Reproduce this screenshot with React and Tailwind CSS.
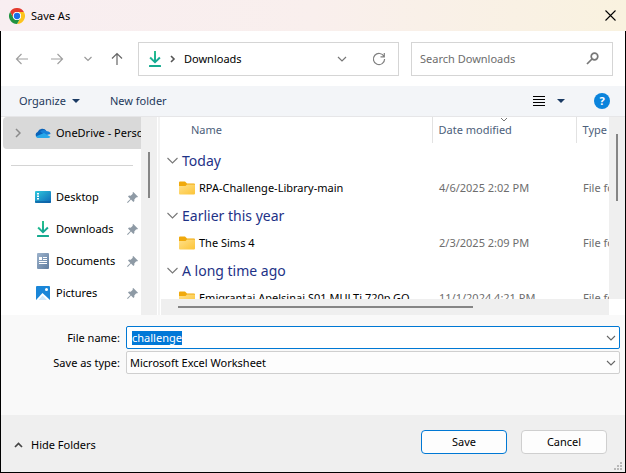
import { useEffect, useRef } from "react";

function ChromeLogo() {
  return (
    <svg width="16" height="16" viewBox="0 0 48 48" aria-hidden="true">
      <circle cx="24" cy="24" r="24" fill="#fff" />
      <path d="M24 12h20.8A24 24 0 0 0 3.2 12l10.4 18A12 12 0 0 1 24 12z" fill="#e33b2e" />
      <path d="M34.4 30 24 48A24 24 0 0 0 44.8 12H24a12 12 0 0 1 10.4 18z" fill="#fcc31e" />
      <path d="M13.6 30 3.2 12A24 24 0 0 0 24 48l10.4-18a12 12 0 0 1-20.8 0z" fill="#229342" />
      <circle cx="24" cy="24" r="12" fill="#fff" />
      <circle cx="24" cy="24" r="9.5" fill="#1a6ee8" />
    </svg>
  );
}

function Stroke({ w, h, d, width = 1.2, className = "" }) {
  return (
    <svg
      width={w}
      height={h}
      viewBox={`0 0 ${w} ${h}`}
      fill="none"
      stroke="currentColor"
      strokeWidth={width}
      className={`shrink-0 ${className}`}
      aria-hidden="true"
    >
      <path d={d} />
    </svg>
  );
}

function DownloadIcon() {
  return (
    <svg width="16" height="16" viewBox="0 0 16 16" fill="none" className="shrink-0" aria-hidden="true">
      <defs>
        <linearGradient id="dl" x1="0" y1="0" x2="0.6" y2="1">
          <stop offset="0" stopColor="#2fc98b" />
          <stop offset="1" stopColor="#0fa394" />
        </linearGradient>
      </defs>
      <path d="M7 0h2v9l3.200-3.200 1.400 1.400L8 12.600 2.400 7.200l1.400-1.400L7 9z" fill="url(#dl)" />
      <rect x="2" y="14" width="12" height="2" rx="0.5" fill="#16ab90" />
    </svg>
  );
}

function OneDriveIcon() {
  return (
    <svg width="16" height="16" viewBox="0 0 16 16" className="shrink-0" aria-hidden="true">
      <path d="M2.5 12.6A3 3 0 0 1 2.6 7 5 5 0 0 1 11.6 6.2L9 12z" fill="#0a62b8" />
      <path d="M5.3 6.8a4 4 0 0 1 6.3-.6A3.7 3.7 0 0 1 15.6 9l-5 1.2z" fill="#1780d8" />
      <path d="M.7 11.6 9 7.9l6.4 3.9a2.6 2.6 0 0 1-2.2 1.2H3.2a3 3 0 0 1-2.5-1.4z" fill="#28a8ea" />
    </svg>
  );
}

function DesktopIcon() {
  return (
    <svg width="16" height="16" viewBox="0 0 16 16" className="shrink-0" aria-hidden="true">
      <defs>
        <linearGradient id="dk" x1="0" y1="0" x2="1" y2="1">
          <stop offset="0" stopColor="#2fc8dc" />
          <stop offset="1" stopColor="#0e68b8" />
        </linearGradient>
      </defs>
      <rect x="0" y="2" width="16" height="12" rx="1" fill="url(#dk)" />
      <path d="M2 4h2v1.500H2zM2 6.500h2V8H2zM2 9h2v1.500H2z" fill="#fff" />
      <path d="M0 12h16v1a1 1 0 0 1-1 1H1a1 1 0 0 1-1-1z" fill="#0c5a9c" opacity=".6" />
    </svg>
  );
}

function DocumentIcon() {
  return (
    <svg width="16" height="16" viewBox="0 0 16 16" className="shrink-0" aria-hidden="true">
      <defs>
        <linearGradient id="dc" x1="0" y1="0" x2="1" y2="1">
          <stop offset="0" stopColor="#9db3cc" />
          <stop offset="1" stopColor="#5f7c9f" />
        </linearGradient>
      </defs>
      <rect x="2" y="0" width="12" height="16" rx="1" fill="url(#dc)" />
      <path d="M4 4h3v3H4zM8 4h4v1H8zM8 6h4v1H8zM4 8h8v1H4zM4 10h8v1H4z" fill="#fff" />
    </svg>
  );
}

function PicturesIcon() {
  return (
    <svg width="16" height="16" viewBox="0 0 16 16" className="shrink-0" aria-hidden="true">
      <rect x="1" y="1" width="14" height="14" rx="1" fill="#1a86d8" />
      <path d="M1.500 14.500 7.500 8l7 6.500a1 1 0 0 1-.5.500H2a1 1 0 0 1-.5-.5z" fill="#fff" />
      <path d="M3.500 15 7.500 10.500 12 15z" fill="#cfe8fb" />
      <circle cx="11.500" cy="4.500" r="1.500" fill="#fff" />
    </svg>
  );
}

function FolderIcon() {
  return (
    <svg width="16" height="14" viewBox="0 0 16 14" className="shrink-0" aria-hidden="true">
      <defs>
        <linearGradient id="fo" x1="0" y1="0" x2="1" y2="1">
          <stop offset="0" stopColor="#ffe08a" />
          <stop offset="1" stopColor="#fcc437" />
        </linearGradient>
      </defs>
      <path d="M0 1.500A1 1 0 0 1 1 .5h5L8 2.500h7a1 1 0 0 1 1 1V8H0z" fill="#f0a90c" />
      <path d="M0 5h6.500L8 3.500h7.500a.5.5 0 0 1 .5.500v8.500a1 1 0 0 1-1 1H1a1 1 0 0 1-1-1z" fill="url(#fo)" />
    </svg>
  );
}

function PinIcon() {
  return (
    <svg width="11" height="11" viewBox="0 0 11 11" fill="#8e9aa5" className="shrink-0" aria-hidden="true">
      <path d="M6.300 0 11 4.700l-1 .8-.8-.2L7.300 7.400l.1 1.700-1 .9L4 7.600.8 11 0 10.200 3.400 7 1 4.600l1-1 1.700.1L5.800 1.800 5.500.8z" />
    </svg>
  );
}

function Caret() {
  return (
    <svg width="8" height="4" viewBox="0 0 8 4" fill="#1a3a63" className="shrink-0" aria-hidden="true">
      <path d="M0 0h8L4 4z" />
    </svg>
  );
}

const places = [
  { name: "Desktop", Icon: DesktopIcon },
  { name: "Downloads", Icon: DownloadIcon },
  { name: "Documents", Icon: DocumentIcon },
  { name: "Pictures", Icon: PicturesIcon },
];

const groups = [
  { title: "Today", file: "RPA-Challenge-Library-main", date: "4/6/2025 2:02 PM" },
  { title: "Earlier this year", file: "The Sims 4", date: "2/3/2025 2:09 PM" },
  { title: "A long time ago", file: "Emigrantai.Apelsinai.S01.MULTi.720p.GO", date: "11/1/2024 4:21 PM" },
];

function TitleBar() {
  return (
    <header className="flex h-[31px] items-center bg-linear-to-r from-[#f8eef1] via-[#f9efed] to-[#f9f2df] pr-[10px] pl-[9px]">
      <ChromeLogo />
      <h1 className="ml-[6px] flex-1">Save As</h1>
      <button type="button" aria-label="Close" className="text-black">
        <Stroke w={11} h={11} d="M.5.5l10 10M10.500.5l-10 10" width={1.1} />
      </button>
    </header>
  );
}

function NavRow() {
  return (
    <nav className="flex h-[55px] items-center bg-white pr-[12px] pl-[14px]">
      <button type="button" aria-label="Back" className="text-[#a0a0a0]">
        <Stroke w={14} h={12} d="M13 6H1.500M6.500 1 1.500 6l5 5" />
      </button>
      <button type="button" aria-label="Forward" className="ml-[21px] text-[#a0a0a0]">
        <Stroke w={14} h={12} d="M1 6h11.500M7.500 1l5 5-5 5" />
      </button>
      <button type="button" aria-label="Recent locations" className="ml-[19px] text-[#9a9a9a]">
        <Stroke w={10} h={6} d="M1.500 1 5 4.500 8.500 1" />
      </button>
      <button type="button" aria-label="Up" className="ml-[17px] text-[#666]">
        <Stroke w={14} h={14} d="M7 13V1.500M2 6.500l5-5 5 5" />
      </button>
      <div className="ml-[14px] flex h-[34px] flex-1 items-center border border-[#d5d5d5] pr-[12px] pl-[8px]">
        <DownloadIcon />
        <Stroke w={6} h={8} d="M1 1l3 3-3 3" width={1.6} className="ml-[7px] text-[#555]" />
        <span className="ml-[8px] flex-1">Downloads</span>
        <button type="button" aria-label="Previous locations" className="text-[#777]">
          <Stroke w={10} h={6} d="M1 1l4 4 4-4" />
        </button>
        <button type="button" aria-label="Refresh" className="ml-[25px] text-[#808080]">
          <Stroke w={14} h={14} d="M12 4.500A5.600 5.600 0 1 0 12.600 7M12.300 1v3.800H8.500" />
        </button>
      </div>
      <div className="ml-[12px] flex h-[34px] w-[202px] items-center border border-[#d5d5d5] pr-[13px] pl-[8px]">
        <input
          type="search"
          aria-label="Search Downloads"
          placeholder="Search Downloads"
          className="min-w-0 flex-1 bg-transparent outline-none placeholder:text-[#6d6d6d]"
        />
        <svg width="13" height="13" viewBox="0 0 13 13" fill="none" stroke="#777" strokeWidth="1.7" aria-hidden="true">
          <circle cx="8.500" cy="4.500" r="3.300" />
          <path d="M6 7 1 12" />
        </svg>
      </div>
    </nav>
  );
}

function Toolbar() {
  return (
    <div className="flex h-[31px] items-center border-b border-[#e6e6e8] bg-[#f3f5f8] pr-[15px] pl-[18px] text-[#1e395b]">
      <button type="button" className="flex items-center gap-[6px]">
        Organize <Caret />
      </button>
      <button type="button" className="ml-[30px]">New folder</button>
      <button type="button" aria-label="Change view" className="ml-auto text-black">
        <Stroke w={12} h={11} d="M0 .5h12M0 3.500h12M0 6.500h12M0 9.500h12" width={1} />
      </button>
      <button type="button" aria-label="More view options" className="ml-[12px]">
        <Caret />
      </button>
      <button
        type="button"
        aria-label="Help"
        className="ml-[29px] flex size-4 items-center justify-center rounded-full bg-[#0b84dc] font-bold text-white"
      >
        ?
      </button>
    </div>
  );
}

function Sidebar() {
  return (
    <aside className="flex w-[156px] shrink-0 bg-white">
      <div className="w-[140px] overflow-hidden pl-[2px]">
        <a href="#onedrive" className="flex h-[32px] items-center rounded-l-sm bg-[#d9d9d9] pl-[12px] whitespace-nowrap">
          <Stroke w={6} h={10} d="M1 1l4 4-4 4" width={1.5} className="mr-[14px] text-[#8a8a8a]" />
          <OneDriveIcon />
          <span className="ml-[5px]">OneDrive - Personal</span>
        </a>
        <div className="flex h-[32px] items-center pr-[8px] pl-[8px]">
          <hr className="w-full border-[#d4d4d4]" />
        </div>
        <ul>
          {places.map(({ name, Icon }) => (
            <li key={name}>
              <a href={`#${name}`} className="flex h-[32px] items-center pr-[3px] pl-[32px]">
                <Icon />
                <span className="ml-[5px] flex-1">{name}</span>
                <PinIcon />
              </a>
            </li>
          ))}
        </ul>
      </div>
      <div className="flex w-[16px] justify-center bg-[#efefef] pt-[35px]">
        <div className="h-[46px] w-[2px] bg-[#858585]" />
      </div>
    </aside>
  );
}

function FileList() {
  return (
    <section className="flex min-w-0 flex-1 flex-col bg-white">
      <div className="flex h-[182px]">
        <div className="min-w-0 flex-1 overflow-hidden">
          <table className="w-[535px] table-fixed border-collapse text-left">
            <colgroup>
              <col className="w-[271px]" />
              <col className="w-[144px]" />
              <col className="w-[120px]" />
            </colgroup>
            <thead className="text-[#4c607a]">
              <tr className="h-[26px]">
                <th className="p-0 pl-[30px] font-normal">Name</th>
                <th className="relative border-l border-[#e2e2e2] p-0 pl-[6px] font-normal">
                  Date modified
                  <Stroke w={8} h={5} d="M1 0l3 3 3-3" width={1} className="absolute top-[1px] left-[67px] text-[#777]" />
                </th>
                <th className="border-l border-[#e2e2e2] p-0 pl-[6px] font-normal">Type</th>
              </tr>
            </thead>
            <tbody aria-hidden="true">
              <tr className="h-[4px]">
                <td colSpan={3} className="p-0" />
              </tr>
            </tbody>
            {groups.map((g) => (
              <tbody key={g.title}>
                <tr className="h-[27px]">
                  <th colSpan={3} className="p-0 pl-[6px] font-normal">
                    <button type="button" className="flex items-center gap-[4px] text-[14px] leading-[18px] text-[#1e3287]">
                      <Stroke w={11} h={7} d="M.5 1l5 5 5-5" width={1.1} className="text-[#777]" />
                      {g.title}
                    </button>
                  </th>
                </tr>
                <tr className="h-[28px] text-[#6d6d6d]">
                  <td className="p-0 pl-[18px]">
                    <div className="flex items-center gap-[4px] whitespace-nowrap text-black">
                      <FolderIcon />
                      {g.file}
                    </div>
                  </td>
                  <td className="p-0 pl-[7px]">{g.date}</td>
                  <td className="p-0 pl-[7px]">File folder</td>
                </tr>
              </tbody>
            ))}
          </table>
        </div>
        <div className="flex w-[16px] justify-center bg-[#efefef] pt-[17px]">
          <div className="h-[67px] w-[2px] bg-[#858585]" />
        </div>
      </div>
      <div className="mr-[16px] flex h-[16px] items-center bg-[#efefef] pl-[17px]">
        <div className="h-[2px] w-[295px] bg-[#858585]" />
      </div>
    </section>
  );
}

function SaveForm() {
  const nameRef = useRef(null);
  useEffect(() => {
    nameRef.current.focus();
    nameRef.current.select();
  }, []);
  return (
    <div className="grid grid-cols-[119px_1fr] items-center gap-x-[6px] gap-y-[2px] bg-[#f9f9f9] pt-[11px] pr-[5px] pb-[41px]">
      <label htmlFor="file-name" className="text-right">File name:</label>
      <div className="flex h-[23px] items-center rounded-xs border border-[#0078d4] bg-white pr-[3px]">
        <input
          id="file-name"
          ref={nameRef}
          defaultValue="challenge"
          className="min-w-0 flex-1 bg-transparent pl-[5px] outline-none selection:bg-[#0078d7] selection:text-white"
        />
        <Stroke w={10} h={6} d="M1 1l4 4 4-4" width={1.1} className="text-[#666]" />
      </div>
      <label htmlFor="save-type" className="text-right">Save as type:</label>
      <div className="flex h-[23px] items-center rounded-xs border border-[#cfcfcf] bg-[#fdfdfd] pr-[3px]">
        <select id="save-type" className="min-w-0 flex-1 appearance-none bg-transparent pl-[3px] outline-none">
          <option>Microsoft Excel Worksheet</option>
        </select>
        <Stroke w={10} h={6} d="M1 1l4 4 4-4" width={1.1} className="text-[#666]" />
      </div>
    </div>
  );
}

function ResizeGrip() {
  return (
    <svg width="8" height="8" viewBox="0 0 8 8" fill="#b8b8b8" className="absolute right-[3px] bottom-[2px]" aria-hidden="true">
      <path d="M6 0h2v2H6zM3 3h2v2H3zM6 3h2v2H6zM0 6h2v2H0zM3 6h2v2H3zM6 6h2v2H6z" />
    </svg>
  );
}

function Footer() {
  return (
    <footer className="relative flex h-[57px] items-start bg-[#efefef] pt-[15px] pr-[18px] pl-[13px]">
      <button type="button" className="flex h-[30px] items-center gap-[8px]">
        <Stroke w={9} h={6} d="M1 5l3.500-3.500L8 5" width={1.7} className="text-[#444]" />
        Hide Folders
      </button>
      <div className="ml-auto flex gap-[14px]">
        <button type="button" className="h-[24px] w-[86px] rounded border border-[#0078d4] bg-[#fdfdfd]">Save</button>
        <button type="button" className="h-[24px] w-[86px] rounded border border-[#cfcfcf] bg-[#fdfdfd]">Cancel</button>
      </div>
      <ResizeGrip />
    </footer>
  );
}

export default function App() {
  return (
    <div className="w-full font-['Noto_Sans','Open_Sans',sans-serif] text-[11px] leading-[14px] text-black">
      <TitleBar />
      <main className="border-x border-b border-black">
        <NavRow />
        <Toolbar />
        <div className="flex h-[198px] bg-white">
          <Sidebar />
          <div className="w-[4px] shrink-0 border-x border-white bg-[#f3f3f3]" />
          <FileList />
        </div>
        <SaveForm />
        <Footer />
      </main>
    </div>
  );
}
